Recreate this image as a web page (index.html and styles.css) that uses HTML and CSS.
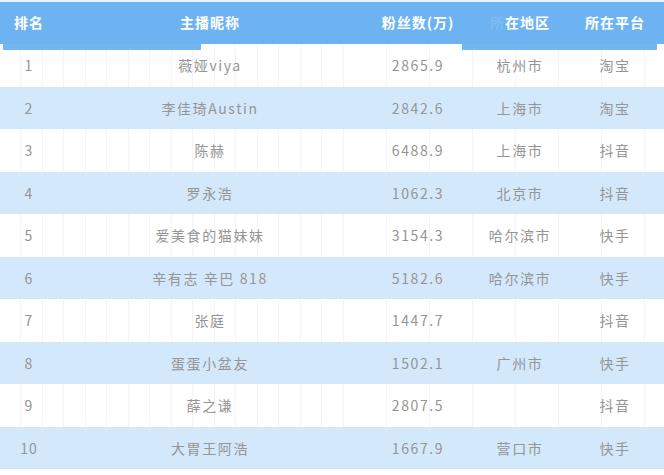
FILE: index.html
```html
<!DOCTYPE html>
<html lang="zh">
<head>
<meta charset="utf-8">
<link rel="stylesheet" href="styles.css">
</head>
<body>
<div class="table">
  <div class="head">
    <div class="c c1">排名</div>
    <div class="c c2">主播昵称</div>
    <div class="c c3">粉丝数(万)</div>
    <div class="c c4"><span class="ghost">所</span>在地区</div>
    <div class="c c5">所在平台</div>
  </div>
  <div class="row odd"><div class="c c1">1</div><div class="c c2">薇娅viya</div><div class="c c3">2865.9</div><div class="c c4">杭州市</div><div class="c c5">淘宝</div></div>
  <div class="row even"><div class="c c1">2</div><div class="c c2">李佳琦Austin</div><div class="c c3">2842.6</div><div class="c c4">上海市</div><div class="c c5">淘宝</div></div>
  <div class="row odd"><div class="c c1">3</div><div class="c c2">陈赫</div><div class="c c3">6488.9</div><div class="c c4">上海市</div><div class="c c5">抖音</div></div>
  <div class="row even"><div class="c c1">4</div><div class="c c2">罗永浩</div><div class="c c3">1062.3</div><div class="c c4">北京市</div><div class="c c5">抖音</div></div>
  <div class="row odd"><div class="c c1">5</div><div class="c c2">爱美食的猫妹妹</div><div class="c c3">3154.3</div><div class="c c4">哈尔滨市</div><div class="c c5">快手</div></div>
  <div class="row even"><div class="c c1">6</div><div class="c c2">辛有志 辛巴 818</div><div class="c c3">5182.6</div><div class="c c4">哈尔滨市</div><div class="c c5">快手</div></div>
  <div class="row odd"><div class="c c1">7</div><div class="c c2">张庭</div><div class="c c3">1447.7</div><div class="c c4"></div><div class="c c5">抖音</div></div>
  <div class="row even"><div class="c c1">8</div><div class="c c2">蛋蛋小盆友</div><div class="c c3">1502.1</div><div class="c c4">广州市</div><div class="c c5">快手</div></div>
  <div class="row odd"><div class="c c1">9</div><div class="c c2">薛之谦</div><div class="c c3">2807.5</div><div class="c c4"></div><div class="c c5">抖音</div></div>
  <div class="row even"><div class="c c1">10</div><div class="c c2">大胃王阿浩</div><div class="c c3">1667.9</div><div class="c c4">营口市</div><div class="c c5">快手</div></div>
</div>
</body>
</html>
```
FILE: styles.css
```css
html, body {
  margin: 0;
  padding: 0;
  background: #ffffff;
}
body {
  width: 664px;
  height: 475px;
  overflow: hidden;
  font-family: "Noto Sans CJK SC", "Noto Sans", sans-serif;
}
.table {
  display: flex;
  flex-direction: column;
}
.head, .row {
  display: grid;
  grid-template-columns: 58px 304px 112px 92px 98px;
  align-items: center;
}
.head {
  position: relative;
  height: 42px;
  border-top: 2px solid #e6f2fc;
  background: #6db3f1;
  color: #ffffff;
  font-weight: bold;
  font-size: 14px;
  letter-spacing: 1px;
}
.head::before, .head::after {
  content: "";
  position: absolute;
  top: 42px;
  height: 6px;
  background: #72b6f2;
  z-index: 2;
}
.head::before { left: 3px; width: 198px; }
.head::after { left: 462px; width: 195px; }
.head .c { padding-bottom: 2px; }
.ghost { color: #7cbbf2; }
.row {
  height: 42.5px;
  color: #959595;
  font-size: 14px;
  letter-spacing: 1.6px;
}
.odd {
  background-color: #ffffff;
  background-image: repeating-linear-gradient(90deg, transparent 0, transparent 20.5px, #f5f3f3 20.5px, #f5f3f3 21.5px);
}
.even {
  background: #d4e8fb;
}
.c {
  text-align: center;
  white-space: nowrap;
}
.head .c1 { text-align: left; padding-left: 14px; }
.row .c1 { letter-spacing: 1px; }
```
